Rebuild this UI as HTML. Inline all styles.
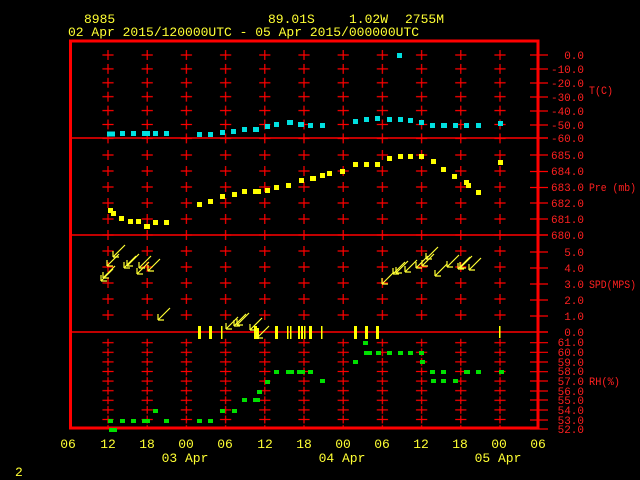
<!DOCTYPE html>
<html><head><meta charset="utf-8"><style>
html,body{margin:0;padding:0;background:#000;width:640px;height:480px;overflow:hidden}
svg{display:block}
text{font-family:"Liberation Mono",monospace}
.y{fill:#ffff33;font-size:13px}
.r{fill:#ff2020;font-size:11px}
</style></head><body>
<svg width="640" height="480" viewBox="0 0 640 480" xmlns="http://www.w3.org/2000/svg">
<defs>
<pattern id="pT" patternUnits="userSpaceOnUse" x="88.4" y="48.05" width="39.2" height="13.9">
<path d="M14 6.95H25.2M19.6 2V11.9" stroke="#f00" stroke-width="1.2"/></pattern>
<pattern id="pP" patternUnits="userSpaceOnUse" x="88.4" y="147" width="39.2" height="16">
<path d="M14 8H25.2M19.6 3V13" stroke="#f00" stroke-width="1.2"/></pattern>
<pattern id="pR" patternUnits="userSpaceOnUse" x="88.4" y="337.9" width="39.2" height="9.6">
<path d="M14 4.8H25.2M19.6 0.8V8.8" stroke="#f00" stroke-width="1.2"/></pattern>
<path id="a" d="M0 0L12 -12M0 0H6M0 0V-6" stroke="#ff3" stroke-width="1.2" fill="none"/>
</defs>
<g class="y" style="font-size:13px">
<text x="84" y="23">8985</text>
<text x="268" y="23">89.01S</text>
<text x="349" y="23">1.02W</text>
<text x="405" y="23">2755M</text>
<text x="68" y="36">02 Apr 2015/120000UTC - 05 Apr 2015/000000UTC</text>
</g>
<rect x="88.4" y="48.05" width="431.2" height="97.3" fill="url(#pT)"/>
<rect x="88.4" y="147" width="431.2" height="176" fill="url(#pP)"/>
<rect x="88.4" y="337.9" width="431.2" height="91" fill="url(#pR)"/>
<g stroke="#f00" stroke-width="1.5">
<line x1="71" y1="138" x2="548" y2="138"/>
<line x1="71" y1="235" x2="548" y2="235"/>
<line x1="71" y1="332" x2="548" y2="332"/>
</g>
<rect x="70.5" y="41" width="467.5" height="387" fill="none" stroke="#f00" stroke-width="3"/>
<path stroke="#f00" stroke-width="1.2" d="M530 55H548M530 69H548M530 83H548M530 97H548M530 111H548M530 125H548M530 155H548M530 171.5H548M530 187.5H548M530 203H548M530 219H548M530 252H548M530 268H548M530 284H548M530 300H548M530 316H548M530 342.7H548M530 352.3H548M530 362H548M530 371.7H548M530 381H548M530 391H548M530 400H548M530 410H548M530 420H548M530 429H548"/>
<g class="r" text-anchor="end">
<text x="584" y="59">0.0</text><text x="584" y="73">-10.0</text><text x="584" y="87">-20.0</text><text x="584" y="101">-30.0</text><text x="584" y="115">-40.0</text><text x="584" y="129">-50.0</text><text x="584" y="142">-60.0</text>
<text x="584" y="159">685.0</text><text x="584" y="175">684.0</text><text x="584" y="191">683.0</text><text x="584" y="207">682.0</text><text x="584" y="223">681.0</text><text x="584" y="239">680.0</text>
<text x="584" y="256">5.0</text><text x="584" y="272">4.0</text><text x="584" y="288">3.0</text><text x="584" y="304">2.0</text><text x="584" y="320">1.0</text><text x="584" y="336">0.0</text>
<text x="584" y="346">61.0</text><text x="584" y="356">60.0</text><text x="584" y="366">59.0</text><text x="584" y="375">58.0</text><text x="584" y="385">57.0</text><text x="584" y="395">56.0</text><text x="584" y="404">55.0</text><text x="584" y="414">54.0</text><text x="584" y="424">53.0</text><text x="584" y="433">52.0</text>
</g>
<g class="r">
<text x="589" y="94" textLength="24" lengthAdjust="spacingAndGlyphs">T(C)</text><text x="589" y="191" textLength="47" lengthAdjust="spacingAndGlyphs">Pre (mb)</text><text x="589" y="288" textLength="47" lengthAdjust="spacingAndGlyphs">SPD(MPS)</text><text x="589" y="385" textLength="31" lengthAdjust="spacingAndGlyphs">RH(%)</text>
</g>
<g fill="#00e0e0">
<rect x="107" y="131.5" width="8" height="5"/><rect x="120" y="131" width="5" height="5"/><rect x="131" y="131" width="5" height="5"/><rect x="142" y="131" width="8" height="5"/><rect x="153" y="131" width="5" height="5"/><rect x="164" y="131" width="5" height="5"/><rect x="197" y="132" width="5" height="5"/><rect x="208" y="132" width="5" height="5"/><rect x="220" y="130" width="5" height="5"/><rect x="231" y="129" width="5" height="5"/><rect x="242" y="127" width="5" height="5"/><rect x="253" y="127" width="6" height="5"/><rect x="265" y="124" width="5" height="5"/><rect x="274" y="122" width="5" height="5"/><rect x="287" y="120" width="6" height="5"/><rect x="298" y="122" width="6" height="5"/><rect x="308" y="123" width="5" height="5"/><rect x="320" y="123" width="5" height="5"/><rect x="353" y="119" width="5" height="5"/><rect x="364" y="117" width="5" height="5"/><rect x="375" y="116" width="5" height="5"/><rect x="387" y="117" width="5" height="5"/><rect x="398" y="117" width="5" height="5"/><rect x="408" y="118" width="5" height="5"/><rect x="419" y="120" width="5" height="5"/><rect x="430" y="123" width="5" height="5"/><rect x="441" y="123" width="6" height="5"/><rect x="453" y="123" width="5" height="5"/><rect x="464" y="123" width="5" height="5"/><rect x="476" y="123" width="5" height="5"/><rect x="498" y="121" width="5" height="5"/><rect x="397" y="53" width="5" height="5"/>
</g>
<g fill="#ffff00">
<rect x="108" y="208" width="5" height="5"/><rect x="111" y="211" width="5" height="5"/><rect x="119" y="216" width="5" height="5"/><rect x="128" y="219" width="5" height="5"/><rect x="136" y="219" width="5" height="5"/><rect x="144" y="224" width="6" height="5"/><rect x="153" y="220" width="5" height="5"/><rect x="164" y="220" width="5" height="5"/>
<rect x="197" y="202" width="5" height="5"/><rect x="208" y="199" width="5" height="5"/><rect x="220" y="194" width="5" height="5"/><rect x="232" y="192" width="5" height="5"/><rect x="242" y="189" width="5" height="5"/><rect x="253" y="189" width="8" height="5"/><rect x="265" y="188" width="5" height="5"/><rect x="274" y="185" width="5" height="5"/><rect x="286" y="183" width="5" height="5"/><rect x="299" y="178" width="5" height="5"/><rect x="310" y="176" width="6" height="5"/><rect x="320" y="173" width="5" height="5"/><rect x="327" y="171" width="5" height="5"/><rect x="340" y="169" width="5" height="5"/><rect x="353" y="162" width="5" height="5"/><rect x="364" y="162" width="5" height="5"/><rect x="375" y="162" width="5" height="5"/><rect x="387" y="156" width="5" height="5"/><rect x="398" y="154" width="5" height="5"/><rect x="408" y="154" width="5" height="5"/><rect x="419" y="154" width="5" height="5"/><rect x="431" y="159" width="5" height="5"/><rect x="441" y="167" width="5" height="5"/><rect x="452" y="174" width="5" height="5"/><rect x="464" y="180" width="5" height="5"/><rect x="466" y="183" width="5" height="5"/><rect x="476" y="190" width="5" height="5"/><rect x="498" y="160" width="5" height="5"/>
</g>
<g fill="#00e000">
<rect x="108" y="419" width="5" height="4"/><rect x="120" y="419" width="5" height="4"/><rect x="131" y="419" width="5" height="4"/><rect x="142" y="419" width="8" height="4"/><rect x="153" y="409" width="5" height="4"/><rect x="164" y="419" width="5" height="4"/><rect x="197" y="419" width="5" height="4"/><rect x="208" y="419" width="5" height="4"/><rect x="220" y="409" width="5" height="4"/><rect x="232" y="409" width="5" height="4"/><rect x="242" y="398" width="5" height="4"/><rect x="253" y="398" width="7" height="4"/><rect x="257" y="390" width="5" height="4"/><rect x="265" y="380" width="5" height="4"/><rect x="274" y="370" width="5" height="4"/><rect x="286" y="370" width="8" height="4"/><rect x="297" y="370" width="8" height="4"/><rect x="308" y="370" width="5" height="4"/><rect x="320" y="379" width="5" height="4"/><rect x="353" y="360" width="5" height="4"/><rect x="363" y="341" width="5" height="4"/><rect x="364" y="351" width="8" height="4"/><rect x="376" y="351" width="5" height="4"/><rect x="387" y="351" width="5" height="4"/><rect x="398" y="351" width="5" height="4"/><rect x="408" y="351" width="5" height="4"/><rect x="419" y="351" width="5" height="4"/><rect x="420" y="360" width="5" height="4"/><rect x="430" y="370" width="5" height="4"/><rect x="431" y="379" width="5" height="4"/><rect x="441" y="370" width="5" height="4"/><rect x="441" y="379" width="5" height="4"/><rect x="453" y="379" width="5" height="4"/><rect x="464" y="370" width="6" height="4"/><rect x="476" y="370" width="5" height="4"/><rect x="499" y="370" width="5" height="4"/><rect x="109" y="428" width="8" height="4"/>
</g>
<g fill="#ffff00">
<rect x="198" y="326" width="3" height="13"/><rect x="209" y="326" width="3" height="13"/><rect x="221" y="326" width="1.5" height="13"/><rect x="254" y="326" width="3" height="13"/><rect x="257" y="328" width="2" height="11"/><rect x="275" y="326" width="3" height="13"/><rect x="287" y="326" width="1.5" height="13"/><rect x="290" y="326" width="1.5" height="13"/><rect x="298" y="326" width="2" height="13"/><rect x="301" y="326" width="2" height="13"/><rect x="304" y="326" width="1.5" height="13"/><rect x="309" y="326" width="3" height="13"/><rect x="321" y="326" width="1.5" height="13"/><rect x="354" y="326" width="3" height="13"/><rect x="365" y="326" width="3" height="13"/><rect x="376" y="326" width="3" height="13"/><rect x="499" y="326" width="1.5" height="12"/>
</g>
<g>
<use href="#a" x="107" y="266"/><use href="#a" x="113" y="257"/><use href="#a" x="101" y="281"/><use href="#a" x="103" y="278"/><use href="#a" x="124" y="268"/><use href="#a" x="127" y="266"/><use href="#a" x="137" y="274"/><use href="#a" x="139" y="268"/><use href="#a" x="148" y="271"/><use href="#a" x="158" y="320"/>
<use href="#a" x="226" y="329"/><use href="#a" x="234" y="326"/><use href="#a" x="237" y="325"/><use href="#a" x="250" y="330"/><use href="#a" x="257" y="338"/>
<use href="#a" x="382" y="284"/><use href="#a" x="393" y="274"/><use href="#a" x="396" y="273"/><use href="#a" x="405" y="272"/><use href="#a" x="416" y="268"/><use href="#a" x="422" y="266"/><use href="#a" x="426" y="259"/><use href="#a" x="435" y="276"/><use href="#a" x="447" y="267"/><use href="#a" x="458" y="269"/><use href="#a" x="460" y="268"/><use href="#a" x="469" y="270"/>
</g>
<g class="y" text-anchor="middle">
<text x="68" y="448">06</text><text x="108" y="448">12</text><text x="147" y="448">18</text><text x="186" y="448">00</text><text x="225" y="448">06</text><text x="265" y="448">12</text><text x="304" y="448">18</text><text x="343" y="448">00</text><text x="382" y="448">06</text><text x="421" y="448">12</text><text x="460" y="448">18</text><text x="499" y="448">00</text><text x="538" y="448">06</text>
<text x="185" y="462">03 Apr</text><text x="342" y="462">04 Apr</text><text x="498" y="462">05 Apr</text>
</g>
<text class="y" x="15" y="476">2</text>
</svg>
</body></html>
